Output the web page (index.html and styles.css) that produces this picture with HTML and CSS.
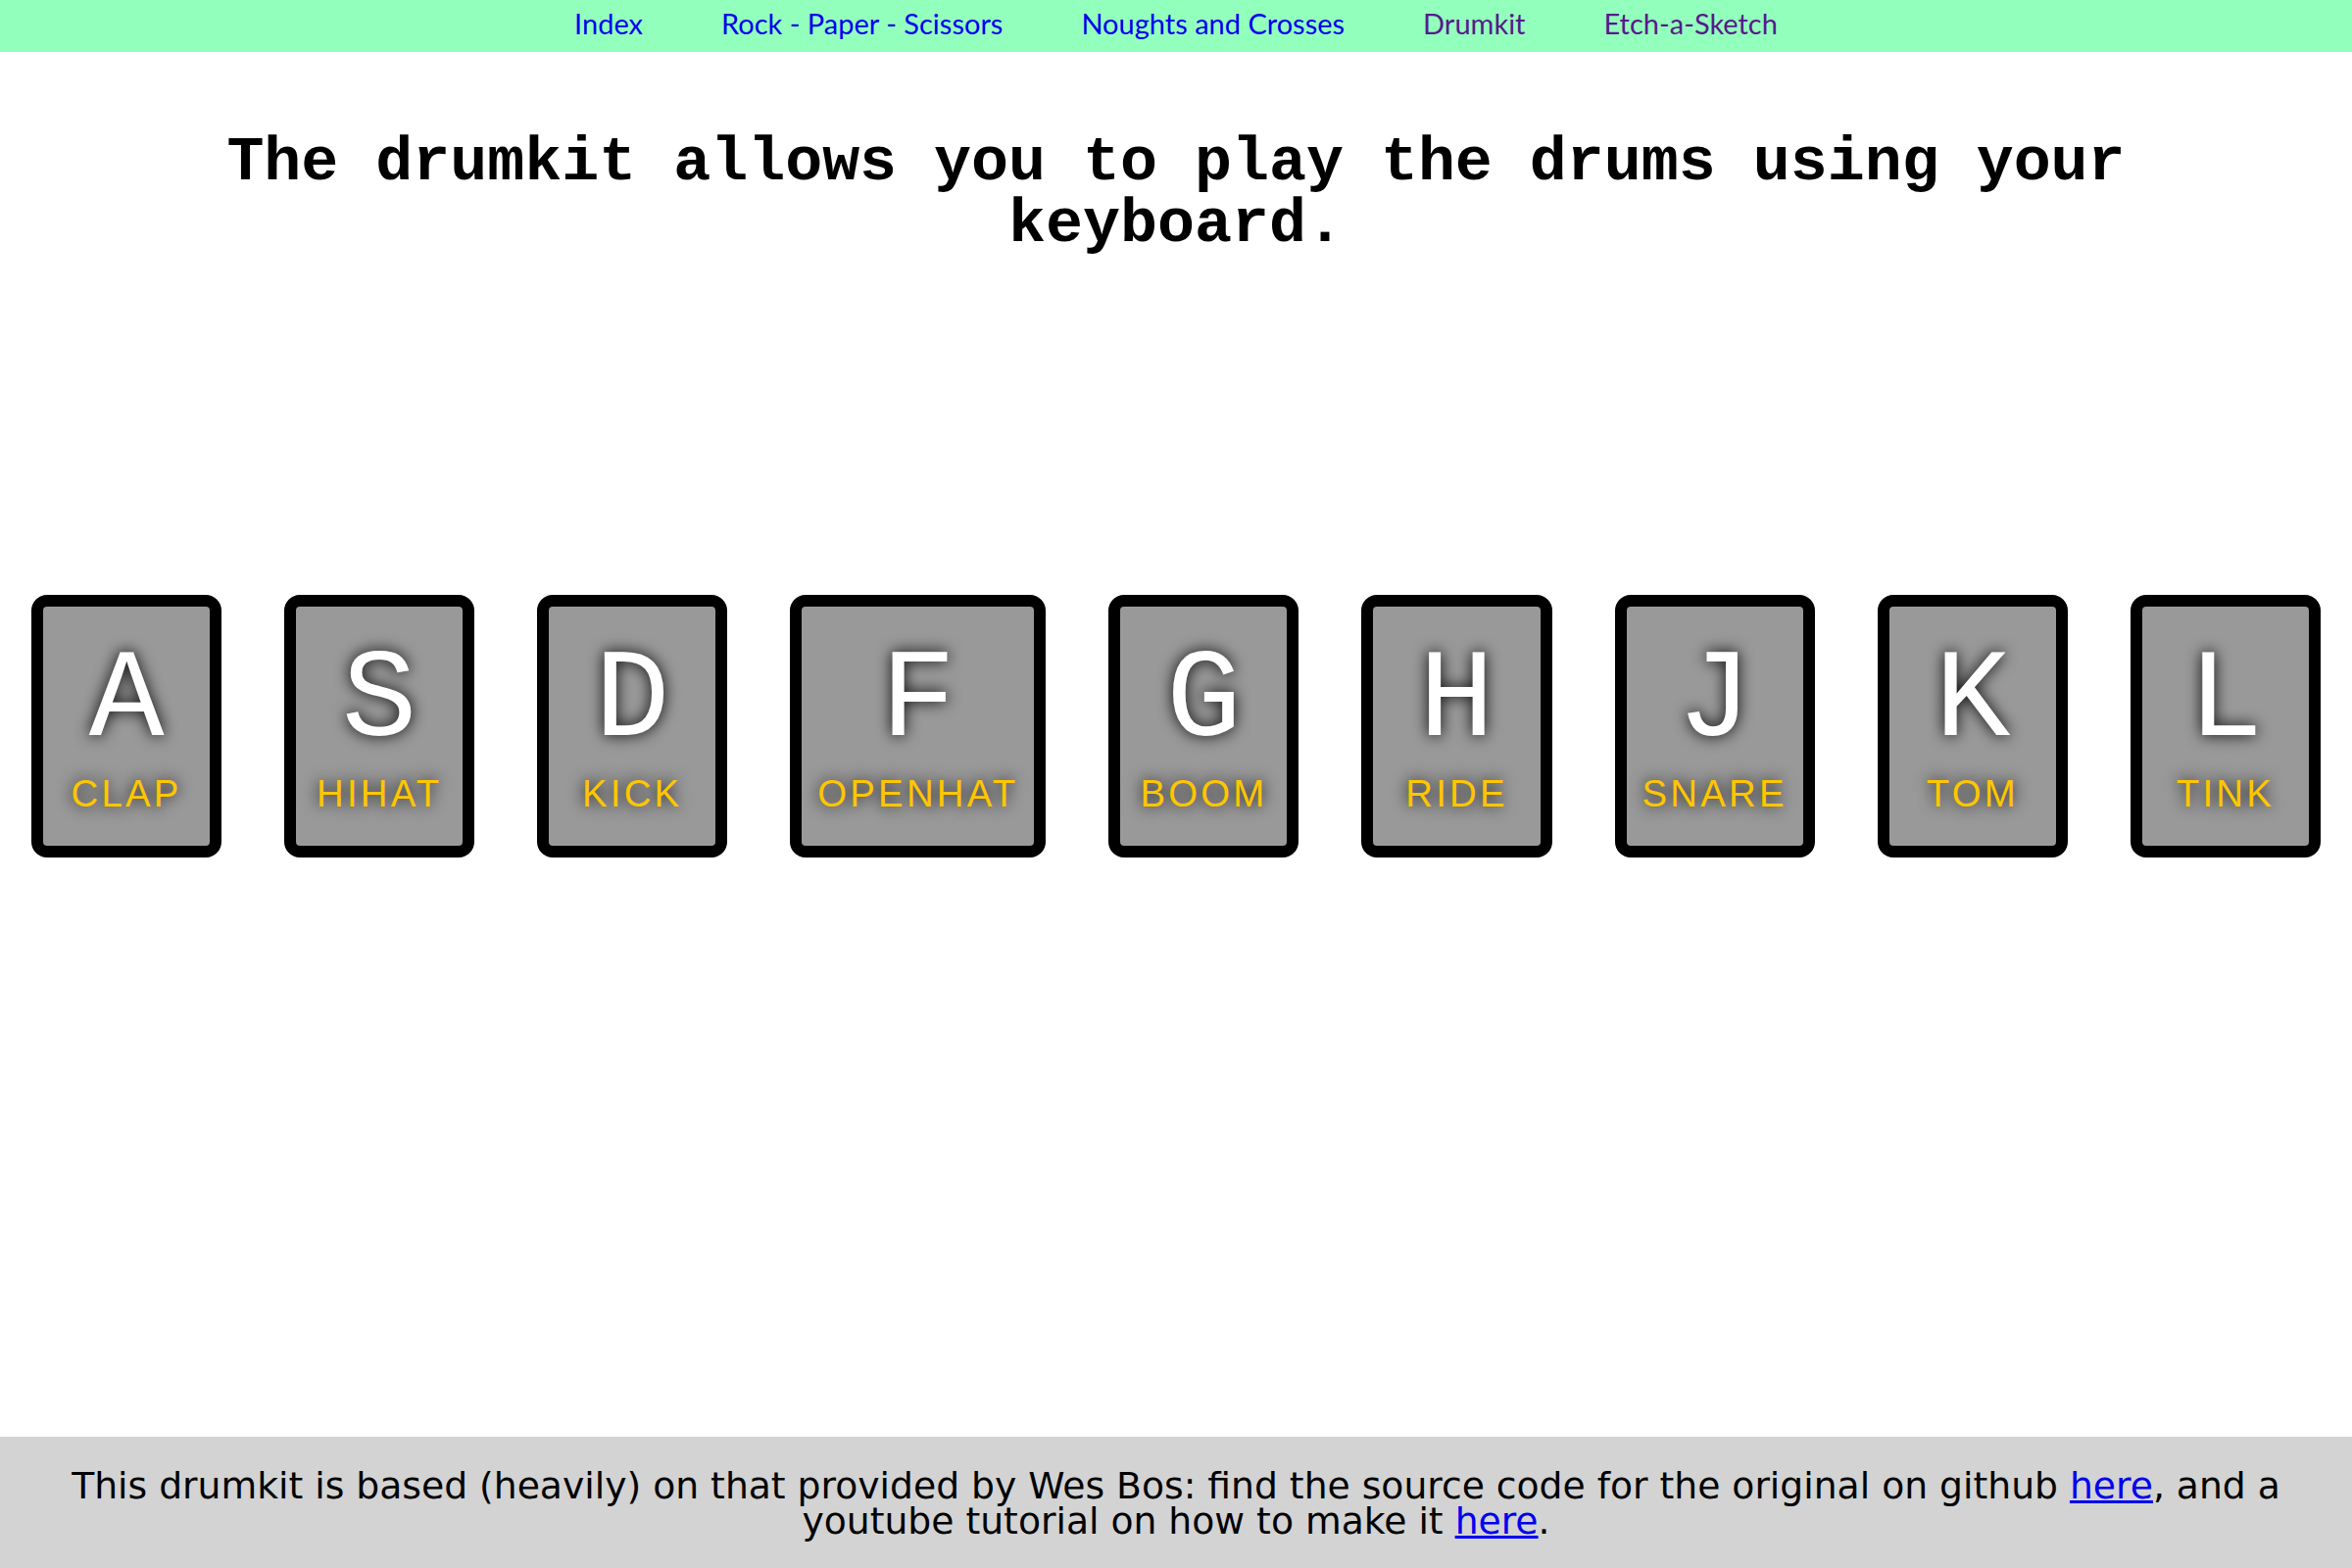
FILE: index.html
```html
<!DOCTYPE html>
<html lang="en">
<head>
<meta charset="utf-8">
<title>Drumkit</title>
<link rel="stylesheet" href="styles.css">
</head>
<body>
<nav class="nav">
  <a class="nav-link" href="#">Index</a>
  <a class="nav-link" href="#">Rock - Paper - Scissors</a>
  <a class="nav-link" href="#">Noughts and Crosses</a>
  <a class="nav-link nav-link--visited" href="#">Drumkit</a>
  <a class="nav-link nav-link--visited" href="#">Etch-a-Sketch</a>
</nav>
<main class="main">
  <h1 class="title">The drumkit allows you to play the drums using your keyboard.</h1>
  <div class="keys">
    <div class="key"><kbd class="key-letter">A</kbd><span class="sound">clap</span></div>
    <div class="key"><kbd class="key-letter">S</kbd><span class="sound">hihat</span></div>
    <div class="key"><kbd class="key-letter">D</kbd><span class="sound">kick</span></div>
    <div class="key"><kbd class="key-letter">F</kbd><span class="sound">openhat</span></div>
    <div class="key"><kbd class="key-letter">G</kbd><span class="sound">boom</span></div>
    <div class="key"><kbd class="key-letter">H</kbd><span class="sound">ride</span></div>
    <div class="key"><kbd class="key-letter">J</kbd><span class="sound">snare</span></div>
    <div class="key"><kbd class="key-letter">K</kbd><span class="sound">tom</span></div>
    <div class="key"><kbd class="key-letter">L</kbd><span class="sound">tink</span></div>
  </div>
</main>
<footer class="footer">
  <p class="footer-text">This drumkit is based (heavily) on that provided by Wes Bos: find the source code for the original on github <a class="footer-link" href="#">here</a>, and a youtube tutorial on how to make it <a class="footer-link" href="#">here</a>.</p>
</footer>
</body>
</html>
```
FILE: styles.css
```css
html {
  font-size: 32px;
}

body {
  margin: 0;
  min-height: 100vh;
  display: flex;
  flex-direction: column;
  font-family: "Liberation Sans", Arial, sans-serif;
  background: #ffffff;
}

.nav {
  box-sizing: border-box;
  height: 53px;
  padding-top: 6px;
  background: #93ffbc;
  display: flex;
  justify-content: center;
  gap: 80px;
  font-family: Lato, sans-serif;
  font-size: 29px;
  line-height: 36px;
}

.nav-link {
  color: #0000ee;
  text-decoration: none;
}

.nav-link--visited {
  color: #551a8b;
}

.main {
  flex: 1;
  display: flex;
  flex-direction: column;
}

.title {
  margin: 82px 0 0;
  padding: 0 100px;
  font-family: "Liberation Mono", "Courier New", monospace;
  font-weight: bold;
  font-size: 63.3px;
  line-height: 63px;
  text-align: center;
  color: #000;
}

.keys {
  display: flex;
  justify-content: center;
  margin-top: 346px;
}

.key {
  width: 10rem;
  margin: 0 1rem;
  padding: 27px 0.5rem 31px;
  border: 0.4rem solid #000;
  border-radius: 0.5rem;
  background: rgba(0, 0, 0, 0.4);
  color: #fff;
  text-align: center;
  text-shadow: 0 0 0.5rem #000;
  font-size: 1.5rem;
}

.key-letter {
  display: block;
  font-family: "Liberation Mono", "Courier New", monospace;
  font-size: 4rem;
  line-height: 140px;
}

.sound {
  display: block;
  margin-top: 2px;
  font-size: 1.2rem;
  text-transform: uppercase;
  letter-spacing: 0.1rem;
  color: #ffc600;
}

.footer {
  background: #d3d3d3;
  padding: 32px 20px 30px;
}

.footer-text {
  margin: 0;
  font-family: Verdana, "DejaVu Sans", sans-serif;
  font-size: 37.7px;
  line-height: 36px;
  text-align: center;
  color: #000;
}

.footer-link {
  color: #0000ee;
}
```
